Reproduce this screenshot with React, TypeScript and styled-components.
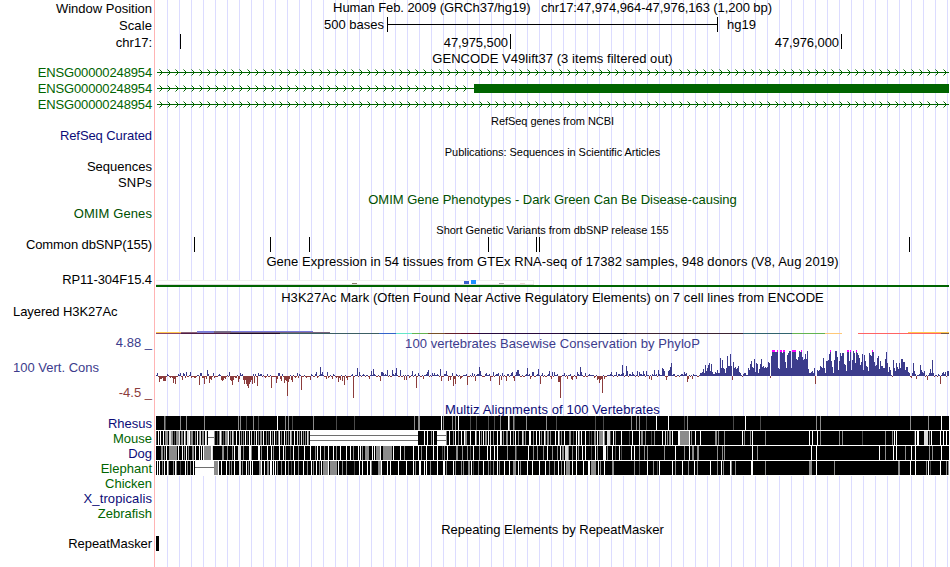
import React from "react";
import styled, { createGlobalStyle } from "styled-components";

const GlobalStyle = createGlobalStyle`
  body {
    margin: 0;
    background: #fff;
    overflow: hidden;
  }
`;

const Browser = styled.main`
  width: 950px;
  height: 567px;
  overflow: hidden;
  font-family: "Liberation Sans", Arial, sans-serif;
  font-size: 13px;
  line-height: 16px;
  color: #000;
  white-space: pre;
  background:
    linear-gradient(#ffb4b4, #ffb4b4) 154px 0 / 1px 100% no-repeat,
    repeating-linear-gradient(to right, transparent 0 11px, #dcdcff 11px 12px) 156px 0 / 793px 100% no-repeat,
    #fff;
`;

const Row = styled.section<{ $h: number }>`
  display: grid;
  grid-template-columns: 156px 793px;
  height: ${(p) => p.$h}px;
`;

const Label = styled.div<{ $color?: string; $top?: number; $left?: boolean; $ls?: number }>`
  box-sizing: border-box;
  height: 0;
  padding: ${(p) => p.$top ?? 0}px 4px 0 13px;
  text-align: ${(p) => (p.$left ? "left" : "right")};
  letter-spacing: ${(p) => p.$ls ?? 0}px;
  color: ${(p) => p.$color ?? "#000"};
`;

const Title = styled.h2<{ $color?: string; $small?: boolean; $top?: number; $ls?: number }>`
  margin: 0;
  height: 0;
  padding-top: ${(p) => p.$top ?? 0}px;
  text-align: center;
  font-weight: 400;
  font-size: ${(p) => (p.$small ? 11 : 13)}px;
  letter-spacing: ${(p) => p.$ls ?? 0}px;
  color: ${(p) => p.$color ?? "#000"};
`;

const Plot = styled.svg`
  display: block;
  overflow: visible;
  shape-rendering: crispEdges;
`;

const ScaleTrack = styled.div`
  display: flex;
`;

const ScaleText = styled.span`
  width: 228px;
  padding-right: 3px;
  box-sizing: content-box;
  text-align: right;
`;

const ScaleEnd = styled.span`
  padding-left: 9px;
`;

const Coordinate = styled.div<{ $w: number }>`
  box-sizing: border-box;
  width: ${(p) => p.$w}px;
  height: 15px;
  padding: 1px 2px 0 0;
  border-right: 1px solid #000;
  text-align: right;
  letter-spacing: -0.08px;
`;

const CoordinateTrack = styled.div`
  display: flex;
`;

const NAVY = "#0c0c78";
const GREEN = "#006400";
const BLUE = "#3c3c8c";
const RED = "#8c3c3c";
const ORIGIN = 156;
const END = 949;

function Gene({ exon }: { exon?: number }) {
  const stop = exon ?? END;
  const heads: number[] = [];
  for (let x = 159; x < stop - 3; x += 8) heads.push(x - ORIGIN);
  return (
    <Plot width={793} height={16}>
      <rect x={1} y={7} width={stop - 157} height={1} fill={GREEN} />
      {heads.map((x) => (
        <g key={x} fill={GREEN}>
          <rect x={x} y={4} width={1} height={1} opacity={0.5} />
          <rect x={x + 1} y={5} width={1} height={1} />
          <rect x={x + 2} y={6} width={1} height={1} />
          <rect x={x + 2} y={8} width={1} height={1} />
          <rect x={x + 1} y={9} width={1} height={1} />
          <rect x={x} y={10} width={1} height={1} opacity={0.5} />
        </g>
      ))}
      {exon && <rect x={exon - ORIGIN} y={3} width={END - exon} height={9} fill={GREEN} />}
    </Plot>
  );
}

const SNPS = [194, 270, 309, 488, 536, 539, 909];

type Segment = [from: number, to: number, y: number, color: string];

const HISTONE: Segment[] = [
  [156, 181, 28, "#ffc850"], [156, 181, 29, "#8c4664"],
  [181, 197, 28, "#8c6478"], [181, 230, 29, "#501e46"],
  [197, 313, 27, "#7878dc"], [197, 214, 28, "#8080c8"], [214, 231, 27, "#786e8c"],
  [214, 330, 28, "#78647c"], [230, 280, 29, "#1e0a28"], [280, 379, 29, "#3c5f64"],
  [379, 396, 29, "#3264c8"], [396, 412, 29, "#64e6c8"], [412, 428, 29, "#64b450"],
  [428, 445, 29, "#785028"], [445, 461, 29, "#641e28"], [461, 478, 29, "#5a0a28"],
  [478, 560, 29, "#280a3c"], [560, 627, 29, "#0a0a28"], [627, 743, 29, "#3c2332"],
  [743, 792, 29, "#32646e"], [792, 825, 29, "#64b450"], [825, 842, 29, "#ffc878"],
  [858, 941, 29, "#ff6464"], [908, 949, 28, "#ffc850"], [941, 949, 29, "#785a46"],
];

/* Peaks of the conservation signal as "position:height"; negative values hang below the axis. */
const PEAKS = `157:3 180:3 183:3 184:2 186:4 190:4 200:3 201:3 207:6 213:3 229:4 240:3 242:2 253:2 255:2 258:3 261:2 267:2
278:3 279:3 282:2 297:3 299:2 311:2 315:2 316:4 320:9 321:2 322:4 327:4 333:2 159:-6 160:-3 161:-3 163:-5 164:-5 165:-5
170:-2 173:-7 174:-3 175:-8 182:-4 185:-2 194:-2 199:-9 204:-8 206:-3 209:-7 210:-3 211:-4 221:-4 222:-5 223:-4 225:-3
230:-4 231:-5 232:-9 233:-4 238:-6 239:-3 243:-4 244:-8 245:-4 246:-8 247:-10 248:-12 249:-8 250:-6 251:-4 252:-8 254:-7
257:-10 271:-12 276:-7 277:-3 280:-3 281:-5 284:-7 285:-4 286:-5 287:-20 288:-6 289:-3 291:-4 292:-6 301:-14 310:-4 326:-3
332:-3 338:-6 340:-4 342:-5 344:-9 347:-4 357:8 359:4 371:5 373:7 381:4 382:4 383:3 387:6 392:6 395:3 396:8 400:6
412:5 418:3 427:4 428:6 432:3 434:3 440:7 446:5 452:3 472:3 479:9 480:5 486:3 493:4 498:3 502:3 511:3 512:4 516:4 517:6
518:6 527:8 532:4 533:4 538:7 542:3 549:5 353:-22 369:-3 380:-5 404:-4 406:-4 416:-12 423:-3 441:-5 448:-5
450:-4 453:-10 454:-3 455:-8 460:-3 467:-9 475:-5 490:-5 499:-9 501:-4 506:-5 514:-5 530:-3 540:-8
552:4 554:4 557:2 564:3 577:4 580:9 581:4 585:3 611:4 616:4 622:11 623:3 626:10 627:5 632:4 637:5 639:4 643:5 646:5
654:6 656:2 658:6 662:8 663:7 664:5 668:5 669:6 670:9 671:13 684:4 686:3 551:-3 558:-6 560:-22 559:-6 567:-3 571:-3
572:-4 576:-3 597:-4 598:-3 599:-7 600:-4 601:-3 602:-17 604:-3 649:-3 651:-4 666:-4 687:-6 688:-3 692:-3
700:3 701:3 702:4 703:7 704:3 705:11 706:5 707:8 708:11 709:13 710:5 711:12 712:4 713:2 714:2 715:4 716:3 717:6 718:3
719:3 720:18 721:8 722:16 723:8 724:7 725:3 726:8 727:20 728:10 729:10 730:22 731:10 732:-4 733:14 734:8 735:9 736:7
737:8 738:10 739:4 740:3 744:3 745:3 748:8 749:6`;

const TAIL_START = 750;
const TAIL = [
  12, 15, 9, 8, 17, 4, 13, 12, 3, 7, 12, 17, 9, 10, 8, 9, 8, 9, 14, 13,
  -2, 20, 26, 26, 26, 24, 24, 26, 8, 7, 26, 26, 23, 26, 26, 14, 8, 21, 23, 25,
  25, 8, 26, 26, 26, 26, 17, 16, 19, 25, 24, 26, 19, 16, 17, 22, 17, 25, 7, 3,
  3, 4, 5, 3, 8, -8, 0, 6, 5, 6, 10, 9, 8, 18, 8, 3, 15, 15, 16, 22,
  26, 15, 9, 3, 16, 25, 25, 19, 6, 15, 23, 20, 23, 23, 12, 11, 5, 26, 26, 15,
  26, 6, 16, 25, 23, 13, 26, 23, 21, 18, 11, 14, 22, 6, 21, 15, 10, 9, 5, 23,
  21, 20, 26, 24, 14, 10, 11, 18, 20, 7, 15, 10, 10, 8, 8, 17, 24, 13, 4, 9,
  6, 1, -1, 16, 8, 5, 13, 9, 7, 13, 8, 17, 17, 14, 14, 6, 9, 9, 4, 3,
  -1, -2, 3, 13, 5, 2, -3, 1, 1, 2, 11, 6, 4, 3, 5, -1, 1, -4, 1, 3,
  7, 3, 16, 3, -1, 1, 1, -1, 2, 1, -8, 1, 3, 4, 2, 4, -1, 5, 5,
];
const CLIPPED = [772, 773, 774, 777, 780, 781, 783, 784, 792, 793, 794, 795, 801, 830, 847, 848, 850, 856, 872];

function conservationValues(): number[] {
  const values: number[] = [];
  for (let x = ORIGIN; x < TAIL_START; x++) {
    const wave = Math.sin(x * 1.7) + Math.sin(x * 0.61);
    const bias = x > 600 ? 0.7 : x > 350 ? 0.2 : -0.5;
    const v = wave + bias;
    values.push(v > 1.3 ? 2 : v > 0 ? 1 : v < -1.6 ? -2 : -1);
  }
  for (const item of PEAKS.split(/\s+/)) {
    const [x, h] = item.split(":").map(Number);
    values[x - ORIGIN] = h;
  }
  return values.concat(TAIL);
}

const CONSERVATION = conservationValues();

function Conservation() {
  const up = CONSERVATION.map((v, i) => (v > 0 ? `M${i} 26v${-v}h1v${v}z` : "")).join("");
  const down = CONSERVATION.map((v, i) => (v < 0 ? `M${i} 26v${-v}h1v${v}z` : "")).join("");
  return (
    <Plot width={793} height={52}>
      <path d={up} fill={BLUE} />
      <path d={down} fill={RED} />
      {CLIPPED.map((x) => (
        <rect key={x} x={x - ORIGIN} y={0} width={1} height={2} fill="#f0f" />
      ))}
    </Plot>
  );
}

const SHADES: Record<string, string> = { w: "#fff", l: "#dcdcdc", g: "#8c8c8c", d: "#4b4b4b" };

type Gap = { from: number; to: number; lines: number[] };

/* Stripes are written as position, shade and optional width. */
function Alignment({ stripes, gaps = [] }: { stripes: string; gaps?: Gap[] }) {
  const marks = Array.from(stripes.matchAll(/(\d+)([wlgd])(\d*)/g));
  return (
    <Plot width={793} height={15}>
      <rect width={793} height={15} fill="#fff" />
      <rect width={793} height={14} fill="#000" />
      {marks.map((m, i) => (
        <rect key={i} x={Number(m[1]) - ORIGIN} width={Number(m[3] || 1)} height={14} fill={SHADES[m[2]]} />
      ))}
      {gaps.map((g) => (
        <g key={g.from}>
          <rect x={g.from - ORIGIN} width={g.to - g.from} height={14} fill="#fff" />
          {g.lines.map((y) => (
            <rect key={y} x={g.from - ORIGIN} y={y} width={g.to - g.from} height={1} fill="#6e6e6e" />
          ))}
        </g>
      ))}
    </Plot>
  );
}

const RHESUS = `164g 165d 180g 186g 204g 238g 240g 246d 253g 258d 277w 285g 288g 292d 313g 336d 354d 414g 418g2 441w 443g
452g 455g 458w 470d 476d 488d 494d 500g 508w 509g 513g 514d 526g 546g 556d 595d 603d 631g 636g 639g 646d 656w 668w 684d
687g 733d 745w 760d 816g 820g 910g 928g 941w`;

const MOUSE = `156d 158w 160w 163w 165g 166g2 169l2 171g2 174d 176g3 179l 181g2 184w 185g 187l2 189w 190d 191g2 195g 197w
199g 200l 202g 203g 205w 206l 214g 217d 219g 220w 221g 223d 225g3 228w 230g 232l 233g 236w 239l 241g 243g 245w 247d 249w
251l 254g 256w 258g 260g 261g 263w 266g 268d 270w 272g 274w 276d 278g 279w 281g 284w 286g 288g 290l 291g 294w 297l 299g
301l 303g 305g 307l 308g 424w 427w 431g 433w 446g 449w 453g 455w 458g 461w 464w 465g 466g 470w 475w 476g 479w 481g 483w
485g2 488w 490l 493g 497w 500w 501l 503g 506g2 510w 513g 515w 518g 522l 523g 525g 529w2 533g 536w 539w 541g 544w 545g
547g2 550g 555w 558w 559g 561g 564w 569g2 573d 576w 578w 579g 581w 585w 589d 591d 594g2 597w 599g 600g3 603w 604g
607l3 610d 613w 615g 621w 629d 632w 639w 641g2 645g 651d 654g 662w 665l 667g 669g2 672w 678w2 680g9 689w 691g 695w 700w
715g2 718g 724g 742w 744g 750g 752w 765g 809w 812w 817w 820g 839g 842g 862d 885g 892g 894w 896w 914d 915w 917w2 924l4
929g 931w 940w 943w 946w`;

const DOG = `161g2 164g 166w 169g8 178w 182w 184g 186w 188g 192g2 195w 199w 201w 203w 204g7 211w 212l 222g2 227g 232g 234w
238l3 243g 249w2 251g 258w2 261g 267w 271w 273g 279w 283w 285g 290d 293w 298g 304w 310w 315g 317w 320w 324g 328w 333w
336g 340w 346w 350w 353g 358w 360w 362g 365g4 372w 374w 376g4 380w 383g9 393w 400w 404g 413w 418w 421g 426w 433w 437w
442d 444g 447w 456g2 462g 467g 470d 473w 479g 487w 490w 494w 497w 507g 515g 516d 528w 533g 537g 543g 547w 552g 557g 560w
562g2 565l3 568g 572g 576w 578g 582w 585w 591d 595w 597g 603w3 607g 612w 615d 619w 621d 631w 634w 639g 644g 647g 664g
675w 684g 689w 692g2 697g2 717g 722g 724g 752w 757g 811w 816w 879w 885g 893w 896w 905g 911w 915w 929g 932g 941w`;

const ELEPHANT = `157w 159w 162g 164w 167w 168g 173g 175w 176g 180d 185w 187g 190g 193w 214g4 218w 221w 226w 229g 231g 234w
239l2 242g 246w 248g 250w 252w 259g2 261w 264w 267g2 270w 271w 273w 275w 277g 281g 285w 288g 291d 294w 298g 303w 307g
311w 313g 316w 319g 321w 323g5 328w 330g7 338w 342g 346g 354d 359w 362w 367w 370w 371g 378g3 381w 387w 390w 398w 406w
413w 415g 419w2 424w 426w 430g 437w 443w2 446g 453w 455g 461g 463g 468g2 471w 473d 478g 483w 488g 490d 493g 497w 499g
504w 509w 513g3 518w 520g 527w 532w 539w 545w 549g 554g 558w 561g 564w 566g4 572w 576w 583w 588w2 591g 592g4 598w
600g 604w 612g2 634g 639d 647w 653g 657d 659w 672w 675g 682w 688g 694w 697g 710w 717g 721w 723g 730w 731g 735g 751w2
765g 809g3 816w 834g 898g2 910w 915w 926g 928w 930d 940w 946g 948g`;

export default function App() {
  return (
    <>
      <GlobalStyle />
      <Browser>
        <Row $h={17}>
          <Label $top={1}>Window Position</Label>
          <Title $ls={-0.07}>{"Human Feb. 2009 (GRCh37/hg19)   chr17:47,974,964-47,976,163 (1,200 bp)"}</Title>
        </Row>
        <Row $h={17}>
          <Label $top={1} $ls={0.1}>Scale</Label>
          <ScaleTrack>
            <ScaleText>500 bases</ScaleText>
            <Plot width={331} height={15}>
              <rect width={1} height={15} />
              <rect y={7} width={331} height={1} />
              <rect x={330} width={1} height={15} />
            </Plot>
            <ScaleEnd>hg19</ScaleEnd>
          </ScaleTrack>
        </Row>
        <Row $h={17}>
          <Label $top={1}>chr17:</Label>
          <CoordinateTrack>
            <Coordinate $w={25} />
            <Coordinate $w={330}>47,975,500</Coordinate>
            <Coordinate $w={331}>47,976,000</Coordinate>
          </CoordinateTrack>
        </Row>
        <Row $h={14}>
          <Label />
          <Title $ls={0.05}>GENCODE V49lift37 (3 items filtered out)</Title>
        </Row>
        {[undefined, 474, undefined].map((exon, i) => (
          <Row $h={16} key={i}>
            <Label $color={GREEN} $ls={-0.14}>ENSG00000248954</Label>
            <Gene exon={exon} />
          </Row>
        ))}
        <Row $h={15}>
          <Label />
          <Title $small $ls={-0.05}>RefSeq genes from NCBI</Title>
        </Row>
        <Row $h={16}>
          <Label $color={NAVY} $ls={-0.08}>RefSeq Curated</Label>
        </Row>
        <Row $h={15}>
          <Label />
          <Title $small $ls={-0.05}>Publications: Sequences in Scientific Articles</Title>
        </Row>
        <Row $h={16}>
          <Label>Sequences</Label>
        </Row>
        <Row $h={16}>
          <Label $ls={0.2}>SNPs</Label>
        </Row>
        <Row $h={15}>
          <Label />
          <Title $color="#005000" $top={1}>OMIM Gene Phenotypes - Dark Green Can Be Disease-causing</Title>
        </Row>
        <Row $h={16}>
          <Label $color="#005000" $ls={0.1}>OMIM Genes</Label>
        </Row>
        <Row $h={15}>
          <Label />
          <Title $small $ls={-0.02}>Short Genetic Variants from dbSNP release 155</Title>
        </Row>
        <Row $h={15}>
          <Label $ls={-0.11}>Common dbSNP(155)</Label>
          <Plot width={793} height={15}>
            {SNPS.map((x) => (
              <rect key={x} x={x - ORIGIN} width={1} height={15} />
            ))}
          </Plot>
        </Row>
        <Row $h={17}>
          <Label />
          <Title $top={2} $ls={0.055}>Gene Expression in 54 tissues from GTEx RNA-seq of 17382 samples, 948 donors (V8, Aug 2019)</Title>
        </Row>
        <Row $h={18}>
          <Label $top={3} $ls={-0.08}>RP11-304F15.4</Label>
          <Plot width={793} height={18}>
            <rect y={11} width={378} height={5} fill="#f0f0f0" />
            <rect y={12} width={377} height={3} fill="#fff" />
            <rect y={15} width={378} height={1} fill="#dcdcdc" />
            <rect x={196} y={14} width={5} height={1} fill="#8b7d6b" />
            <rect x={308} y={12} width={5} height={3} fill="#3a5fcd" />
            <rect x={315} y={11} width={5} height={4} fill="#1e90ff" />
            <rect x={343} y={14} width={5} height={1} fill="#a0a0a0" />
            <rect x={364} y={14} width={5} height={1} fill="#eed5d2" />
            <rect y={16} width={793} height={2} fill={GREEN} />
          </Plot>
        </Row>
        <Row $h={17}>
          <Label />
          <Title $top={3} $ls={0.06}>H3K27Ac Mark (Often Found Near Active Regulatory Elements) on 7 cell lines from ENCODE</Title>
        </Row>
        <Row $h={30}>
          <Label $left $ls={-0.07}>Layered H3K27Ac</Label>
          <Plot width={793} height={30}>
            {HISTONE.map(([from, to, y, color], i) => (
              <rect key={i} x={from - ORIGIN} y={y} width={to - from} height={1} fill={color} />
            ))}
          </Plot>
        </Row>
        <Row $h={16}>
          <Label $color={BLUE} $top={1}>4.88 _</Label>
          <Title $color={BLUE} $top={2} $ls={0.06}>100 vertebrates Basewise Conservation by PhyloP</Title>
        </Row>
        <Row $h={52}>
          <div>
            <Label $left $color={BLUE} $top={10}>100 Vert. Cons</Label>
            <Label $color={RED} $top={25}>-4.5 _</Label>
          </div>
          <Conservation />
        </Row>
        <Row $h={14}>
          <Label />
          <Title $color={NAVY} $ls={0.11}>Multiz Alignments of 100 Vertebrates</Title>
        </Row>
        <Row $h={15}>
          <Label $color={NAVY}>Rhesus</Label>
          <Alignment stripes={RHESUS} />
        </Row>
        <Row $h={15}>
          <Label $color={GREEN}>Mouse</Label>
          <Alignment
            stripes={MOUSE}
            gaps={[
              { from: 208, to: 214, lines: [6] },
              { from: 310, to: 418, lines: [4, 9] },
              { from: 437, to: 446, lines: [4, 9] },
            ]}
          />
        </Row>
        <Row $h={15}>
          <Label $color={NAVY}>Dog</Label>
          <Alignment stripes={DOG} />
        </Row>
        <Row $h={15}>
          <Label $color={GREEN}>Elephant</Label>
          <Alignment stripes={ELEPHANT} gaps={[{ from: 195, to: 214, lines: [6] }]} />
        </Row>
        <Row $h={15}>
          <Label $color={GREEN}>Chicken</Label>
        </Row>
        <Row $h={15}>
          <Label $color={NAVY} $ls={0.1}>X_tropicalis</Label>
        </Row>
        <Row $h={15}>
          <Label $color={GREEN}>Zebrafish</Label>
        </Row>
        <Row $h={15}>
          <Label />
          <Title $top={1}>Repeating Elements by RepeatMasker</Title>
        </Row>
        <Row $h={16}>
          <Label $ls={-0.07}>RepeatMasker</Label>
          <Plot width={793} height={15}>
            <rect width={3} height={15} />
          </Plot>
        </Row>
      </Browser>
    </>
  );
}
